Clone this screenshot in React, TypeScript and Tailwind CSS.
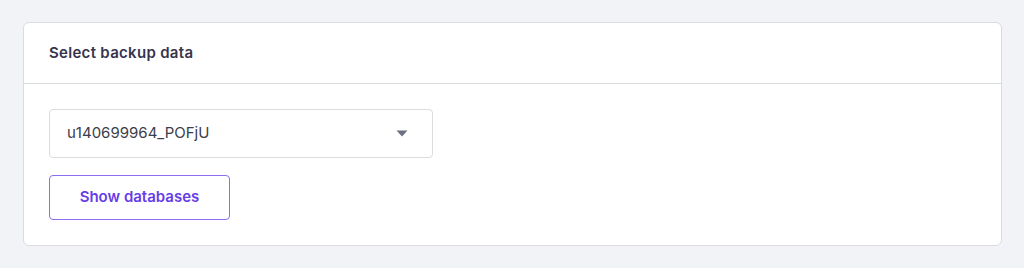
export default function App() {
  return (
    <div
      className="min-h-[268px] bg-[#f2f3f6] pl-[23px] pr-[22px] pt-[22px] pb-[22px]"
      style={{ fontFamily: '"Inter", "Noto Sans", sans-serif' }}
    >
      <div className="rounded-[6px] border border-[#dadce0] bg-white">
        <div className="flex h-[61px] items-center border-b border-[#dadce0] px-[25px]">
          <h2 className="text-[15px] font-semibold tracking-[0.3px] text-[#36344d]">Select backup data</h2>
        </div>
        <div className="px-[25px] pt-[25px] pb-[25px]">
          <div className="flex h-[49px] w-[384px] items-center justify-between rounded-[4px] border border-[#dadce0] pl-[17px] pr-[24px]">
            <span className="text-[15px] text-[#3b3d4a]">u140699964_POFjU</span>
            <svg width="12" height="7" viewBox="0 0 12 7" aria-hidden="true">
              <path d="M0.5 0.5 H11.5 L6 6.5 Z" fill="#6d7081" />
            </svg>
          </div>
          <button
            type="button"
            className="mt-[17px] flex h-[45px] w-[181px] items-center justify-center rounded-[4px] border border-[#8c6ff0] bg-white text-[15px] font-semibold text-[#673de6]"
          >
            Show databases
          </button>
        </div>
      </div>
    </div>
  );
}
